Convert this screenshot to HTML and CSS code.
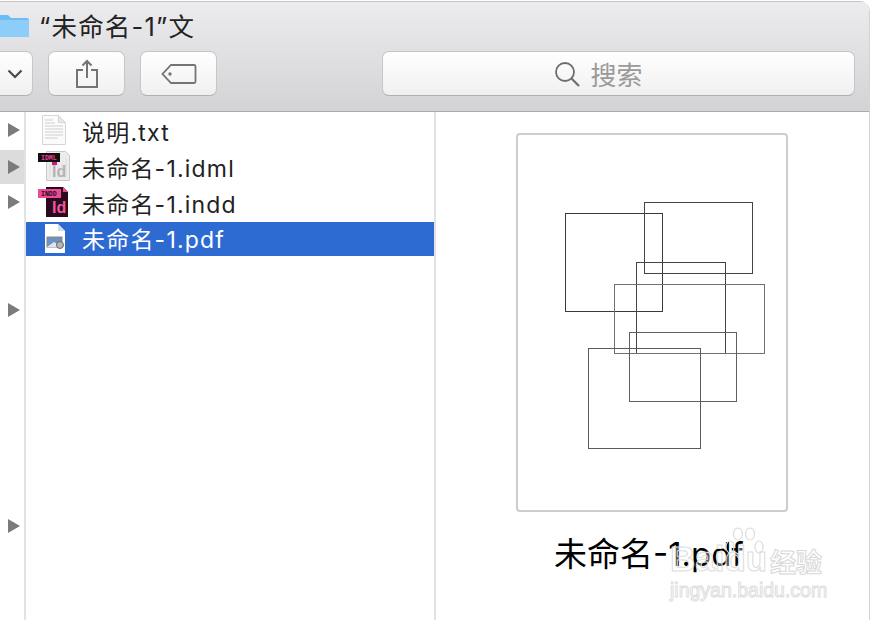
FILE: index.html
```html
<!DOCTYPE html>
<html lang="zh-CN">
<head>
    <meta charset="UTF-8">
    <title>未命名-1</title>
    <link rel="stylesheet" href="styles.css">
</head>
<body>
    <div class="window">
        <header class="toolbar">
            <div class="title-row">
                <svg class="folder" width="30" height="22" viewBox="0 0 30 22">
                    <path d="M-6 0h14l3 3h16a2 2 0 0 1 2 2v16a1 1 0 0 1-1 1H-6z" fill="#6cbcf4"/>
                    <path d="M-6 5h35v16a1 1 0 0 1-1 1H-6z" fill="#8ccdf9"/>
                </svg>
                <span class="title">“未命名-1”文</span>
            </div>
            <div class="button-row">
                <button class="tool-btn view-btn">
                    <svg width="16" height="10" viewBox="0 0 16 10"><path d="M1.500 1.500 8 8l6.500-6.500" fill="none" stroke="#4a4a4a" stroke-width="2.200"/></svg>
                </button>
                <button class="tool-btn">
                    <svg width="24" height="30" viewBox="0 0 24 30">
                        <path d="M8 11H2v17h20V11h-6M12 19V2M7.500 6.500 12 2l4.500 4.500" fill="none" stroke="#747474" stroke-width="2"/>
                    </svg>
                </button>
                <button class="tool-btn">
                    <svg width="36" height="22" viewBox="0 0 36 22">
                        <path d="M10 2h23a1.500 1.500 0 0 1 1.500 1.500v15A1.500 1.500 0 0 1 33 20H10L1.500 11z" fill="none" stroke="#747474" stroke-width="1.800"/>
                        <circle cx="9" cy="11" r="1.700" fill="#747474"/>
                    </svg>
                </button>
                <div class="search">
                    <svg width="26" height="26" viewBox="0 0 26 26">
                        <circle cx="11" cy="11" r="9" fill="none" stroke="#6e6e6e" stroke-width="1.800"/>
                        <path d="M17.500 17.500 25 25" stroke="#6e6e6e" stroke-width="2.200"/>
                    </svg>
                    <span>搜索</span>
                </div>
            </div>
        </header>

        <main class="panes">
            <div class="arrow-col">
                <div class="arrow-row"><i class="arrow"></i></div>
                <div class="arrow-row current"><i class="arrow"></i></div>
                <div class="arrow-row"><i class="arrow"></i></div>
                <div class="arrow-row"></div>
                <div class="arrow-row"></div>
                <div class="arrow-row"><i class="arrow"></i></div>
                <div class="arrow-row"></div>
                <div class="arrow-row"></div>
                <div class="arrow-row"></div>
                <div class="arrow-row"></div>
                <div class="arrow-row"></div>
                <div class="arrow-row"><i class="arrow"></i></div>
            </div>

            <ul class="file-list">
                <li class="file">
                    <svg class="file-icon" width="36" height="32" viewBox="0 0 36 32">
                        <path d="M5.500 1.500h16l7 7v22h-23z" fill="#fbfbfb" stroke="#d6d6d6"/>
                        <path d="M21.500 1.500v7h7z" fill="#e8e8e8" stroke="#d6d6d6"/>
                        <path d="M8 6h8M8 9h10M8 12h18M8 15h18M8 18h18M8 21h18M8 24h13" stroke="#cfcfcf"/>
                    </svg>
                    <span>说明.txt</span>
                </li>
                <li class="file">
                    <svg class="file-icon" width="36" height="32" viewBox="0 0 36 32">
                        <path d="M9.500 1.500h19l4 4v25h-23z" fill="#ececec" stroke="#c8c8c8"/>
                        <path d="M13 14v14M17 14v14M21 14v14M25 14v14M29 8v20" stroke="#dcdcdc"/>
                        <rect x="1" y="3" width="22" height="9" fill="#111"/>
                        <rect x="15" y="12" width="5" height="3" fill="#d0187a"/>
                        <text x="4" y="10" class="badge-text" fill="#ef3e96">IDML</text>
                        <text x="15" y="27" class="id-text" fill="#b4b4b4">Id</text>
                    </svg>
                    <span>未命名-1.idml</span>
                </li>
                <li class="file">
                    <svg class="file-icon" width="36" height="32" viewBox="0 0 36 32">
                        <path d="M9 1h17l5 5v25H9z" fill="#2a0a1c"/>
                        <path d="M26 1v5h5z" fill="#e84b96"/>
                        <rect x="1" y="3" width="23" height="9" fill="#ec4a94"/>
                        <text x="4" y="10" class="badge-text" fill="#2a0a1c">INDD</text>
                        <text x="15" y="27" class="id-text" fill="#f0569e">Id</text>
                    </svg>
                    <span>未命名-1.indd</span>
                </li>
                <li class="file selected">
                    <svg class="file-icon" width="36" height="32" viewBox="0 0 36 32">
                        <path d="M8 1h13l7 7v22H8z" fill="#fff"/>
                        <path d="M21 1v7h7z" fill="#d4dcec"/>
                        <rect x="10" y="14" width="15" height="10" fill="#6f92c4" stroke="#8a8a7a"/>
                        <path d="M10 24l7-5 8 5z" fill="#dfe6f0"/>
                        <circle cx="23" cy="22" r="3.500" fill="#b8b8b0" stroke="#666"/>
                    </svg>
                    <span>未命名-1.pdf</span>
                </li>
            </ul>

            <section class="preview">
                <div class="sheet">
                    <svg class="sheet-art" width="200" height="247" viewBox="0 0 200 247">
                        <rect x="0.500" y="11.500" width="97" height="98" stroke="#3a3a3a"/>
                        <rect x="79.500" y="0.500" width="108" height="71" stroke="#444"/>
                        <rect x="71.500" y="60.500" width="89" height="91" stroke="#444"/>
                        <rect x="49.500" y="82.500" width="150" height="69" stroke="#707070"/>
                        <rect x="64.500" y="130.500" width="107" height="69" stroke="#606060"/>
                        <rect x="23.500" y="146.500" width="112" height="100" stroke="#5a5a5a"/>
                    </svg>
                </div>
                <div class="preview-name">未命名-1.pdf</div>
            </section>
        </main>
    </div>

    <div class="watermark">
        <svg class="paw" width="40" height="40" viewBox="0 0 40 40">
            <g fill="none" stroke="#dcdcdc" stroke-width="1.200">
                <ellipse cx="5" cy="20" rx="4" ry="6"/>
                <ellipse cx="13" cy="7" rx="4.500" ry="6"/>
                <ellipse cx="25" cy="7" rx="4.500" ry="6"/>
                <ellipse cx="34" cy="20" rx="4" ry="6"/>
            </g>
        </svg>
        <div class="wm-brand"><span>Bai</span><span>du</span></div>
        <div class="wm-cn">经验</div>
        <div class="wm-url">jingyan.baidu.com</div>
    </div>
</body>
</html>
```

FILE: styles.css
```css
* {
    margin: 0;
    padding: 0;
    box-sizing: border-box;
}

html, body {
    width: 872px;
    height: 620px;
    overflow: hidden;
    background: #fff;
    font-family: 'Inter', 'Noto Sans CJK SC', sans-serif;
}

.window {
    width: 870px;
    height: 620px;
    margin-top: 1px;
    display: flex;
    flex-direction: column;
    border-right: 1px solid #d4d4d4;
    border-top-right-radius: 10px;
    overflow: hidden;
}

.toolbar {
    height: 111px;
    flex-shrink: 0;
    background: linear-gradient(#ececee, #d3d3d5);
    border-top: 1px solid #c4c4c4;
    border-bottom: 1px solid #a9a9a9;
}

.title-row {
    height: 49px;
    padding-bottom: 4px;
    display: flex;
    align-items: center;
    gap: 9px;
}

.folder {
    flex-shrink: 0;
    margin-top: 3px;
}

.title {
    font-size: 25.500px;
    letter-spacing: 1.200px;
    color: #222;
}

.button-row {
    display: flex;
    align-items: center;
    margin-left: -20px;
}

.tool-btn {
    width: 77px;
    height: 45px;
    margin-right: 15px;
    display: flex;
    align-items: center;
    justify-content: center;
    background: linear-gradient(#fff, #f0f0f0);
    border: 1px solid #c6c6c6;
    border-bottom-color: #b0b0b0;
    border-radius: 7px;
}

.view-btn {
    width: 53px;
    margin-right: 15px;
    padding-left: 16px;
}

.search {
    width: 473px;
    height: 45px;
    margin-left: 150px;
    padding-right: 40px;
    display: flex;
    align-items: center;
    justify-content: center;
    gap: 10px;
    font-size: 26px;
    color: #9a9a9a;
    background: linear-gradient(#fff, #f0f0f0);
    border: 1px solid #c6c6c6;
    border-bottom-color: #b0b0b0;
    border-radius: 7px;
}

.panes {
    flex: 1;
    display: flex;
    min-height: 0;
}

.arrow-col {
    width: 26px;
    flex-shrink: 0;
    border-right: 2px solid #e2e2e2;
}

.arrow-row {
    height: 36px;
    display: flex;
    align-items: center;
    padding-left: 8px;
}

.arrow-row.current {
    height: 34px;
    margin-top: 2px;
    background: #dcdcdc;
}

.arrow {
    width: 0;
    height: 0;
    border-left: 12px solid #7b7b7b;
    border-top: 7px solid transparent;
    border-bottom: 7px solid transparent;
}

.file-list {
    width: 408px;
    flex-shrink: 0;
    list-style: none;
}

.file {
    height: 36px;
    display: flex;
    align-items: center;
    gap: 9px;
    padding-left: 11px;
    font-size: 23px;
    letter-spacing: 1.200px;
    color: #222;
}

.file span {
    margin-top: 1px;
}

.file-icon {
    flex-shrink: 0;
}

.file.selected {
    height: 34px;
    margin-top: 2px;
    background: #2d6bd3;
    color: #fff;
}

.file.selected span {
    margin-top: -3px;
}

.badge-text {
    font: bold 6.500px 'Liberation Mono', monospace;
    letter-spacing: 0;
}

.id-text {
    font: bold 16px 'Liberation Sans', sans-serif;
    letter-spacing: 0;
}

.preview {
    flex: 1;
    border-left: 2px solid #e2e2e2;
    padding: 21px 0 0 80px;
}

.sheet {
    width: 272px;
    height: 379px;
    border: 2px solid #cdcdcd;
    border-radius: 4px;
    padding: 67px 0 0 47px;
}

.sheet-art {
    display: block;
    fill: none;
}

.preview-name {
    margin: 20px 0 0 38px;
    font-size: 33px;
    line-height: 44px;
    color: #000;
}

/* watermark sits over the preview */
.watermark {
    position: absolute;
    left: 670px;
    top: 527px;
    width: 160px;
    height: 75px;
}

.paw {
    position: absolute;
    left: 55px;
    top: 0;
}

.wm-brand {
    position: absolute;
    left: 0;
    top: 12px;
    white-space: nowrap;
    font: bold 35px 'Liberation Sans', sans-serif;
    color: rgba(255, 255, 255, 0.35);
    -webkit-text-stroke: 1px #dcdcdc;
}

.wm-cn {
    position: absolute;
    left: 100px;
    top: 15px;
    font-size: 26px;
    font-weight: bold;
    white-space: nowrap;
    color: #fff;
    -webkit-text-stroke: 1px #d8d8d8;
}

.wm-url {
    position: absolute;
    left: 0;
    top: 52px;
    white-space: nowrap;
    font: 19.500px 'Liberation Sans', sans-serif;
    color: #fff;
    -webkit-text-stroke: 1px #dedede;
}
```
